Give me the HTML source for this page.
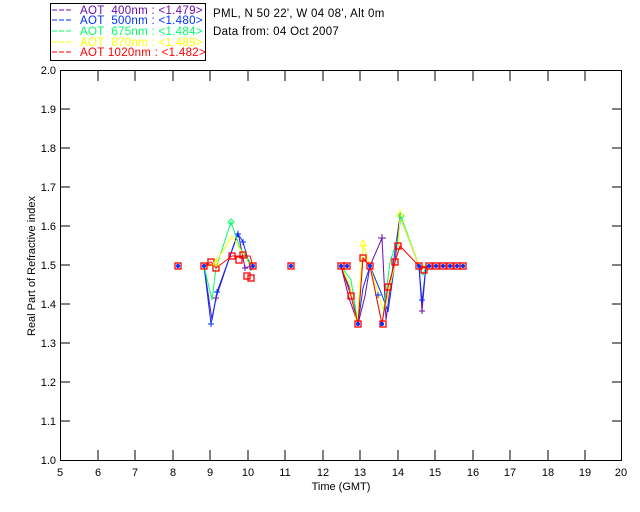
<html><head><style>body{margin:0;background:#fff;width:640px;height:512px;overflow:hidden}svg text{font-family:"Liberation Sans",sans-serif;font-size:11px}.lg{font-size:11.5px;letter-spacing:0.3px}</style></head><body>
<svg width="640" height="512" xmlns="http://www.w3.org/2000/svg">
<rect x="50.5" y="3.5" width="155" height="57" fill="none" stroke="#000"/>
<g stroke-width="1" stroke-dasharray="5,2">
<line x1="52" y1="10" x2="73" y2="10" stroke="#6a0dad"/>
<line x1="52" y1="20" x2="73" y2="20" stroke="#0033ff"/>
<line x1="52" y1="31" x2="73" y2="31" stroke="#00ff66"/>
<line x1="52" y1="42" x2="73" y2="42" stroke="#ffff00"/>
<line x1="52" y1="52" x2="73" y2="52" stroke="#ff0000"/>
</g>
<text class="lg" x="80" y="14" fill="#6a0dad" xml:space="preserve">AOT  400nm : &lt;1.479&gt;</text>
<text class="lg" x="80" y="24" fill="#0033ff" xml:space="preserve">AOT  500nm : &lt;1.480&gt;</text>
<text class="lg" x="80" y="35" fill="#00ff66" xml:space="preserve">AOT  675nm : &lt;1.484&gt;</text>
<text class="lg" x="80" y="46" fill="#ffff00" xml:space="preserve">AOT  870nm : &lt;1.489&gt;</text>
<text class="lg" x="80" y="56" fill="#ff0000" xml:space="preserve">AOT 1020nm : &lt;1.482&gt;</text>
<text class="lg" x="213" y="17" fill="#000">PML, N 50 22', W 04 08', Alt 0m</text>
<text class="lg" x="213" y="35" fill="#000">Data from: 04 Oct 2007</text>
<rect x="60.5" y="70.5" width="561" height="390" fill="none" stroke="#000"/>
<g stroke="#000">
<path d="M98 460v-10M135 460v-10M173 460v-10M210 460v-10M248 460v-10M285 460v-10M323 460v-10M360 460v-10M398 460v-10M435 460v-10M473 460v-10M510 460v-10M548 460v-10M585 460v-10M98 71v10M135 71v10M173 71v10M210 71v10M248 71v10M285 71v10M323 71v10M360 71v10M398 71v10M435 71v10M473 71v10M510 71v10M548 71v10M585 71v10"/>
<path d="M60 109h10M60 148h10M60 187h10M60 226h10M60 265h10M60 304h10M60 343h10M60 382h10M60 421h10M622 109h-10M622 148h-10M622 187h-10M622 226h-10M622 265h-10M622 304h-10M622 343h-10M622 382h-10M622 421h-10"/>
</g>
<g fill="#000" text-anchor="end"><text x="56" y="74">2.0</text><text x="56" y="113">1.9</text><text x="56" y="152">1.8</text><text x="56" y="191">1.7</text><text x="56" y="230">1.6</text><text x="56" y="269">1.5</text><text x="56" y="308">1.4</text><text x="56" y="347">1.3</text><text x="56" y="386">1.2</text><text x="56" y="425">1.1</text><text x="56" y="464">1.0</text></g>
<g fill="#000" text-anchor="middle"><text x="60" y="476">5</text><text x="98" y="476">6</text><text x="135" y="476">7</text><text x="173" y="476">8</text><text x="210" y="476">9</text><text x="248" y="476">10</text><text x="285" y="476">11</text><text x="323" y="476">12</text><text x="360" y="476">13</text><text x="398" y="476">14</text><text x="435" y="476">15</text><text x="473" y="476">16</text><text x="510" y="476">17</text><text x="548" y="476">18</text><text x="585" y="476">19</text><text x="621" y="476">20</text>
<text x="341" y="490">Time (GMT)</text>
<text transform="translate(35 266) rotate(-90)">Real Part of Refractive index</text></g>
<g fill="none" stroke-width="1">
<polyline stroke="#6a0dad" points="204,266 212,320 216,298 238,232 245,268 251,266" />
<polyline stroke="#0033ff" points="204,266 211,324 217,292 238,234 243,242 251,270 253,266"/>
<polyline stroke="#00ff66" points="204,266 212,300 216,268 231,222 240,248 253,266"/>
<polyline stroke="#ffff00" points="204,266 210,266 216,262 232,236 248,262 253,266"/>
<polyline stroke="#ff0000" points="204,266 211,262 216,268 232,256 250,256 253,266"/>
<polyline stroke="#6a0dad" points="341,266 349,298 358,324 365,296 370,266 382,238 386,320 394,258 400,216 419,266 422,311 426,266"/>
<polyline stroke="#0033ff" points="341,266 351,292 358,324 363,288 370,266 382,295 388,312 395,262 400,216 419,266 422,302 426,266"/>
<polyline stroke="#00ff66" points="341,266 351,280 358,324 363,258 370,266 382,324 390,262 398,238 401,216 419,266 423,275 426,266"/>
<polyline stroke="#ffff00" points="341,266 350,286 357,324 363,244 370,266 384,312 391,282 398,250 400,216 419,266 426,266"/>
<polyline stroke="#ff0000" points="341,266 351,296 358,324 363,258 370,266 382,324 388,287 395,262 400,246 419,266 424,268 426,266"/>
<line x1="426" y1="266" x2="463" y2="266" stroke="#ff0000"/>
</g>
<g fill="none" stroke="#ff0000" stroke-width="1.3">
<rect x="175" y="263" width="6" height="6"/><rect x="201" y="263" width="6" height="6"/><rect x="208" y="259" width="6" height="6"/><rect x="213" y="265" width="6" height="6"/><rect x="229" y="253" width="6" height="6"/><rect x="236" y="257" width="6" height="6"/><rect x="240" y="252" width="6" height="6"/><rect x="244" y="273" width="6" height="6"/><rect x="250" y="263" width="6" height="6"/><rect x="248" y="275" width="6" height="6"/><rect x="288" y="263" width="6" height="6"/>
<rect x="338" y="263" width="6" height="6"/><rect x="344" y="263" width="6" height="6"/><rect x="348" y="293" width="6" height="6"/><rect x="355" y="321" width="6" height="6"/><rect x="360" y="255" width="6" height="6"/><rect x="367" y="263" width="6" height="6"/><rect x="380" y="321" width="6" height="6"/><rect x="385" y="284" width="6" height="6"/><rect x="392" y="259" width="6" height="6"/><rect x="395" y="243" width="6" height="6"/>
<rect x="416" y="263" width="6" height="6"/><rect x="421" y="267" width="6" height="6"/><rect x="426" y="263" width="6" height="6"/><rect x="433" y="263" width="6" height="6"/><rect x="440" y="263" width="6" height="6"/><rect x="447" y="263" width="6" height="6"/><rect x="454" y="263" width="6" height="6"/><rect x="460" y="263" width="6" height="6"/>
</g>
<g fill="#0033ff"><circle cx="178" cy="266" r="2"/><circle cx="204" cy="266" r="2"/><circle cx="253" cy="266" r="2"/><circle cx="291" cy="266" r="2"/><circle cx="341" cy="266" r="2"/><circle cx="347" cy="266" r="2"/><circle cx="370" cy="266" r="2"/><circle cx="419" cy="266" r="2"/><circle cx="429" cy="266" r="2"/><circle cx="436" cy="266" r="2"/><circle cx="443" cy="266" r="2"/><circle cx="450" cy="266" r="2"/><circle cx="457" cy="266" r="2"/><circle cx="463" cy="266" r="2"/><circle cx="358" cy="324" r="2"/><circle cx="382" cy="324" r="2"/></g>
<g stroke="#0033ff" stroke-width="1"><path d="M208 324h6M211 321v6M235 234h6M238 231v6M240 242h6M243 239v6M214 292h6M217 289v6M419 300h6M422 297v6M375 295h6M378 292v6M397 216h6M400 213v6"/></g>
<g stroke="#6a0dad" stroke-width="1"><path d="M213 298h6M216 295v6M378 238h8M382 234v8M419 311h6M422 308v6M242 268h6M245 265v6"/></g>
<g fill="none" stroke="#00ff66"><path d="M231 219l3 3-3 3-3-3zM401 213l3 3-3 3-3-3z"/></g>
<g fill="none" stroke="#ffff00"><path d="M363 240l3 6h-6zM216 259l3 6h-6zM400 210l3 6h-6z"/></g>
</svg>
</body></html>
